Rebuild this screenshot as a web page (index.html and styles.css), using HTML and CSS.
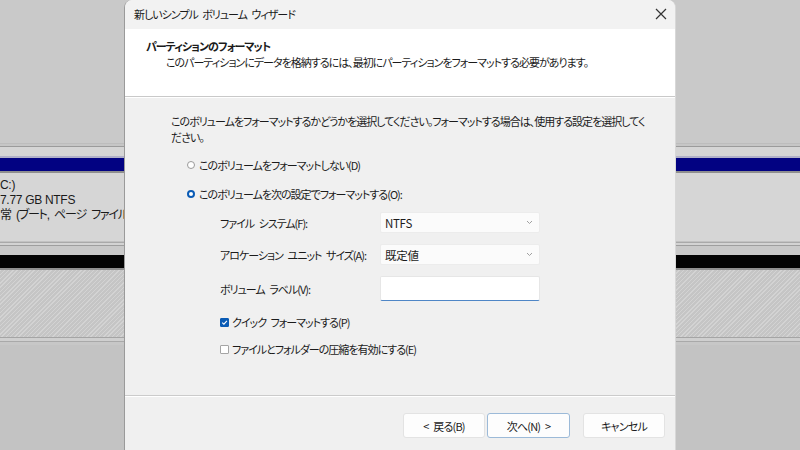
FILE: index.html
```html
<!DOCTYPE html>
<html lang="ja">
<head>
<meta charset="utf-8">
<link rel="stylesheet" href="styles.css">
</head>
<body>
<div class="desk">
  <div class="bg-top"></div>
  <div class="lines lines-a"></div>
  <div class="band-blue"></div>
  <div class="line-dark"></div>
  <div class="vol-info">
    <div>C:)</div>
    <div>7.77 GB NTFS</div>
    <div class="jp">常 (ブート, ページ ファイル, クラ</div>
  </div>
  <div class="lines lines-b"></div>
  <div class="band-black"></div>
  <div class="line-dark"></div>
  <div class="hatch"></div>
  <div class="lines lines-c"></div>
  <div class="bg-bottom"></div>
</div>

<div class="dialog">
  <div class="titlebar">
    <span class="title">新しいシンプル ボリューム ウィザード</span>
    <svg class="close" width="12" height="12" viewBox="0 0 12 12"><path d="M1 1 L11 11 M11 1 L1 11" stroke="#333" stroke-width="1.2" fill="none"/></svg>
  </div>
  <div class="header">
    <div class="h-title">パーティションのフォーマット</div>
    <div class="h-sub">このパーティションにデータを格納するには、最初にパーティションをフォーマットする必要があります。</div>
  </div>
  <div class="content">
    <p class="intro"><span class="nw">このボリュームをフォーマットするかどうかを選択してください。フォーマットする場合は、使用する設定を選択してく</span><br>ださい。</p>
    <div class="radio-row r1"><span class="radio"></span><span>このボリュームをフォーマットしない(D)</span></div>
    <div class="radio-row r2"><span class="radio on"></span><span>このボリュームを次の設定でフォーマットする(O):</span></div>
    <div class="settings">
      <div class="field"><span class="lbl">ファイル システム(F):</span><div class="select"><span class="val">NTFS</span><svg class="chev" width="7" height="5" viewBox="0 0 7 5"><path d="M1 1 L3.5 3.5 L6 1" stroke="#a0a0a0" stroke-width="1" fill="none"/></svg></div></div>
      <div class="field"><span class="lbl">アロケーション ユニット サイズ(A):</span><div class="select"><span class="val">既定値</span><svg class="chev" width="7" height="5" viewBox="0 0 7 5"><path d="M1 1 L3.5 3.5 L6 1" stroke="#a0a0a0" stroke-width="1" fill="none"/></svg></div></div>
      <div class="field f3"><span class="lbl">ボリューム ラベル(V):</span><div class="textbox"></div></div>
      <div class="check-row c1"><span class="check on"><svg width="7" height="7" viewBox="0 0 7 7"><path d="M1.2 3.6 L2.9 5.2 L5.9 1.8" stroke="#fff" stroke-width="1.1" fill="none"/></svg></span><span>クイック フォーマットする(P)</span></div>
      <div class="check-row c2"><span class="check"></span><span>ファイルとフォルダーの圧縮を有効にする(E)</span></div>
    </div>
  </div>
  <div class="footer">
    <button class="btn">&lt; 戻る(B)</button>
    <button class="btn default">次へ(N) &gt;</button>
    <button class="btn cancel">キャンセル</button>
  </div>
</div>
</body>
</html>
```

FILE: styles.css
```css
html, body {
  margin: 0;
  padding: 0;
}
body {
  width: 800px;
  height: 450px;
  overflow: hidden;
  background: #c3c3c3;
  font-family: "Noto Sans CJK JP", "Noto Sans", sans-serif;
  font-feature-settings: "palt";
  color: #1b1b1b;
}
.desk {
  display: flex;
  flex-direction: column;
  width: 800px;
  height: 450px;
}
.bg-top {
  height: 143px;
  background: #c9c9c9;
}
.lines {
  background: #d3d3d3;
}
.lines-a {
  height: 15px;
  background: linear-gradient(#bdbdbd 0 1px, #c6c6c6 1px 3px, #9b9b9b 3px 4px, #d5d5d5 4px 13px, #b0b0c8 13px 15px);
}
.band-blue {
  height: 13px;
  background: #020282;
}
.line-dark {
  height: 2px;
  background: #8f8f8f;
}
.vol-info {
  height: 68px;
  background: #d6d6d6;
  font-family: "Liberation Sans", "Noto Sans CJK JP", sans-serif;
  font-size: 12px;
  line-height: 15px;
  padding-top: 5px;
  box-sizing: border-box;
  color: #1a1a1a;
  letter-spacing: -0.3px;
  white-space: nowrap;
}
.vol-info .jp {
  letter-spacing: -1.2px;
  word-spacing: 3px;
}
.lines-b {
  height: 14px;
  background: linear-gradient(#c2c2c2 0 1px, #a9a9a9 1px 2px, #d3d3d3 2px 4px, #9e9e9e 4px 5px, #c9c9c9 5px 14px);
}
.band-black {
  height: 13px;
  background: #030303;
}
.hatch {
  height: 67px;
  background: repeating-linear-gradient(135deg, #d3d3d3 0 1px, #c5c5c5 1px 3px);
}
.lines-c {
  height: 8px;
  background: linear-gradient(#a5a5a5 0 1px, #cfcfcf 1px 4px, #a9a9a9 4px 5px, #c7c7c7 5px 8px);
}
.bg-bottom {
  flex: 1;
  background: #c3c3c3;
}

/* dialog overlay */
.dialog {
  position: absolute;
  left: 124px;
  top: 0;
  width: 552px;
  height: 460px;
  box-sizing: border-box;
  border-left: 1px solid #9a9a9a;
  border-right: 1px solid #d8d8d8;
  border-radius: 8px 8px 0 0;
  background: #f0f0f0;
  display: flex;
  flex-direction: column;
  overflow: hidden;
  font-size: 11px;
  letter-spacing: -1px;
  word-spacing: 3px;
  white-space: nowrap;
}
.titlebar {
  height: 29px;
  flex: none;
  display: flex;
  align-items: center;
  justify-content: space-between;
  padding: 0 8px 1px 9px;
  box-sizing: border-box;
  background: #f2f2f2;
}
.title {
  color: #1a1a1a;
}
.header {
  height: 68px;
  flex: none;
  box-sizing: border-box;
  background: #ffffff;
  padding: 9px 0 0 21px;
  border-bottom: 1px solid #c9c9c9;
}
.h-title {
  font-weight: bold;
  line-height: 16px;
}
.h-sub {
  padding-left: 20px;
  line-height: 16px;
}
.content {
  height: 299px;
  flex: none;
  box-sizing: border-box;
  padding: 15px 0 0 46px;
  border-top: 1px solid #ffffff;
  border-bottom: 1px solid #cbcbcb;
}
.intro {
  margin: 0;
  line-height: 16px;
}
.radio-row {
  display: flex;
  align-items: center;
  height: 16px;
  padding-left: 16px;
}
.r1 {
  margin-top: 12px;
}
.r2 {
  margin-top: 13px;
}
.radio {
  width: 6px;
  height: 6px;
  border: 1px solid #9a9a9a;
  border-radius: 50%;
  margin-right: 4px;
  background: #fff;
  flex: none;
}
.radio.on {
  width: 4px;
  height: 4px;
  border: 2px solid #0a5bb5;
  background: #fff;
}
.settings {
  padding-left: 49px;
  margin-top: 10px;
}
.field {
  display: flex;
  align-items: center;
  height: 21px;
  margin-bottom: 11px;
}
.lbl {
  width: 160px;
  flex: none;
}
.select {
  width: 160px;
  height: 21px;
  box-sizing: border-box;
  background: #fbfbfb;
  border: 1px solid #ececec;
  border-radius: 2px;
  display: flex;
  align-items: center;
  justify-content: space-between;
  padding: 0 6px 0 4px;
}
.val {
  font-size: 11.5px;
  letter-spacing: -0.3px;
}
.f3 {
  height: 25px;
  margin-bottom: 0;
}
.textbox {
  width: 160px;
  height: 25px;
  box-sizing: border-box;
  background: #ffffff;
  border: 1px solid #e6e6e6;
  border-bottom: 1px solid #4f86c6;
  border-radius: 2px;
}
.check-row {
  display: flex;
  align-items: center;
  height: 16px;
}
.c1 {
  margin-top: 13px;
}
.c2 {
  margin-top: 11px;
}
.check {
  width: 7px;
  height: 7px;
  border: 1px solid #a5a5a5;
  background: #fff;
  border-radius: 1px;
  margin-right: 3px;
  display: flex;
  align-items: center;
  justify-content: center;
  flex: none;
}
.check.on {
  background: #0a5bb5;
  border-color: #0a5bb5;
}
.footer {
  flex: none;
  border-top: 1px solid #ffffff;
  display: flex;
  padding: 16px 0 0 278px;
}
.btn {
  font-family: inherit;
  font-feature-settings: "palt";
  font-size: 11px;
  letter-spacing: -0.8px;
  word-spacing: 3px;
  color: #1a1a1a;
  height: 25px;
  width: 82px;
  background: #fdfdfd;
  border: 1px solid #e3e3e3;
  border-radius: 3px;
  padding: 0;
  margin-right: 2px;
}
.btn.default {
  width: 83px;
  border-color: #9cbad8;
}
.btn.cancel {
  margin-left: 11px;
}
```
